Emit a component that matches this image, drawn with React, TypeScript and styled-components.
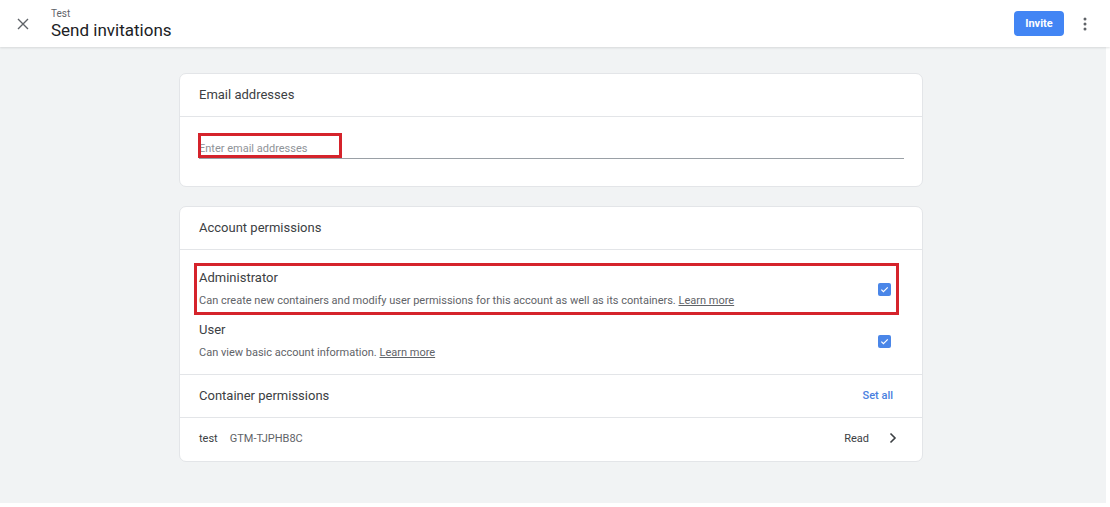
import React from "react";
import styled, { createGlobalStyle } from "styled-components";

const GlobalStyle = createGlobalStyle`
  html, body {
    margin: 0;
    padding: 0;
    background: #ffffff;
    font-family: Roboto, "Liberation Sans", Arial, sans-serif;
    -webkit-font-smoothing: antialiased;
  }
  * { box-sizing: border-box; }
`;

const Page = styled.div`
  width: 1110px;
  height: 507px;
  background: #ffffff;
  display: flex;
  flex-direction: column;
  overflow: hidden;
`;

const TopBar = styled.header`
  height: 47px;
  flex: none;
  display: flex;
  align-items: center;
  padding: 0 13px 0 17px;
  background: #ffffff;
  box-shadow: 0 1px 2px rgba(60, 64, 67, 0.15);
  position: relative;
  z-index: 1;
`;

const CloseButton = styled.button`
  width: 12px;
  height: 12px;
  padding: 0;
  border: none;
  background: none;
  display: flex;
  color: #5f6368;
  cursor: pointer;
`;

const TitleBlock = styled.div`
  margin-left: 22px;
  display: flex;
  flex-direction: column;
  padding-top: 1px;
`;

const Breadcrumb = styled.span`
  font-size: 10px;
  line-height: 12px;
  color: #5f6368;
`;

const Title = styled.h1`
  margin: 0;
  font-size: 17px;
  line-height: 21px;
  font-weight: 400;
  color: #202124;
`;

const Spacer = styled.div`
  flex: 1;
`;

const InviteButton = styled.button`
  width: 50px;
  height: 25px;
  border: none;
  border-radius: 4px;
  background: #4285f4;
  color: #ffffff;
  font-family: inherit;
  font-size: 11px;
  font-weight: 700;
  cursor: pointer;
  margin-top: -1px;
`;

const MoreButton = styled.button`
  width: 24px;
  height: 24px;
  margin-left: 9px;
  border: none;
  background: none;
  padding: 0;
  display: flex;
  align-items: center;
  justify-content: center;
  color: #5f6368;
`;

const Main = styled.main`
  width: 1106px;
  height: 456px;
  background: #f1f3f4;
  padding: 26px 4px 0 0;
`;

const Column = styled.div`
  width: 744px;
  margin: 0 auto;
  display: flex;
  flex-direction: column;
  gap: 19px;
`;

const Card = styled.section`
  background: #ffffff;
  border: 1px solid #e3e5e8;
  border-radius: 7px;
  overflow: hidden;
`;

const CardHeader = styled.div`
  height: 43px;
  display: flex;
  align-items: center;
  justify-content: space-between;
  padding: 0 29px 1px 19px;
  border-bottom: 1px solid #e3e5e8;
`;

const CardTitle = styled.h2`
  margin: 0;
  font-size: 13px;
  font-weight: 400;
  color: #3c4043;
`;

const TextLink = styled.a`
  font-size: 11px;
  font-weight: 500;
  color: #4a7fe0;
  text-decoration: none;
  cursor: pointer;
`;

const EmailBody = styled.div`
  padding: 17px 18px 27px 19px;
`;

const FieldWrap = styled.div`
  position: relative;
  height: 25px;
  border-bottom: 1px solid #9aa0a6;
`;

const EmailInput = styled.input`
  width: 100%;
  height: 24px;
  border: none;
  outline: none;
  padding: 5px 0 0 0;
  font-family: inherit;
  font-size: 11px;
  color: #202124;
  background: transparent;
  &::placeholder {
    color: #8f9398;
  }
`;

const Annotation = styled.div`
  position: absolute;
  left: -1px;
  top: -1px;
  width: 144px;
  height: 25px;
  border: 3px solid #d5232b;
  pointer-events: none;
`;

const OptionList = styled.div`
  padding: 13px 0 7px;
  border-bottom: 1px solid #e3e5e8;
`;

const OptionRow = styled.label<{ $marked?: boolean }>`
  display: flex;
  align-items: center;
  margin: 0 23px 0 14px;
  padding: 5px 8px 5px 5px;
  outline: ${(p) => (p.$marked ? "3px solid #d5232b" : "none")};
  outline-offset: -3px;
`;

const OptionText = styled.div`
  flex: 1;
  display: flex;
  flex-direction: column;
  gap: 4px;
`;

const OptionTitle = styled.span`
  font-size: 13px;
  line-height: 20px;
  color: #3c4043;
`;

const OptionDesc = styled.span`
  font-size: 11px;
  line-height: 18px;
  color: #5f6368;
  a {
    color: #5f6368;
    text-decoration: underline;
  }
`;

const CheckBox = styled.span`
  width: 13px;
  height: 13px;
  border-radius: 2px;
  background: #4a86e8;
  display: flex;
  align-items: center;
  justify-content: center;
  flex: none;
`;

const ContainerRow = styled.div`
  height: 43px;
  display: flex;
  align-items: center;
  padding: 0 25px 3px 19px;
  font-size: 11px;
`;

const ContainerName = styled.span`
  color: #3c4043;
`;

const ContainerId = styled.span`
  margin-left: 12px;
  color: #5f6368;
`;

const RoleText = styled.span`
  color: #3c4043;
  margin-right: 20px;
`;

const Check = () => (
  <svg width="9" height="9" viewBox="0 0 10 10" fill="none">
    <path d="M1.5 5.2l2.3 2.3L8.6 2.6" stroke="#ffffff" strokeWidth="1.3" />
  </svg>
);

type Option = { title: string; desc: string; marked?: boolean };

const options: Option[] = [
  {
    title: "Administrator",
    desc: "Can create new containers and modify user permissions for this account as well as its containers.",
    marked: true,
  },
  { title: "User", desc: "Can view basic account information." },
];

export default function App() {
  return (
    <>
      <GlobalStyle />
      <Page>
        <TopBar>
          <CloseButton aria-label="Close">
            <svg width="12" height="12" viewBox="0 0 12 12">
              <path d="M1 1l10 10M11 1L1 11" stroke="currentColor" strokeWidth="1.4" />
            </svg>
          </CloseButton>
          <TitleBlock>
            <Breadcrumb>Test</Breadcrumb>
            <Title>Send invitations</Title>
          </TitleBlock>
          <Spacer />
          <InviteButton>Invite</InviteButton>
          <MoreButton aria-label="More">
            <svg width="4" height="14" viewBox="0 0 4 14">
              <circle cx="2" cy="2" r="1.5" fill="currentColor" />
              <circle cx="2" cy="7" r="1.5" fill="currentColor" />
              <circle cx="2" cy="12" r="1.5" fill="currentColor" />
            </svg>
          </MoreButton>
        </TopBar>
        <Main>
          <Column>
            <Card>
              <CardHeader>
                <CardTitle>Email addresses</CardTitle>
              </CardHeader>
              <EmailBody>
                <FieldWrap>
                  <EmailInput placeholder="Enter email addresses" />
                  <Annotation />
                </FieldWrap>
              </EmailBody>
            </Card>

            <Card>
              <CardHeader>
                <CardTitle>Account permissions</CardTitle>
              </CardHeader>
              <OptionList>
                {options.map((o) => (
                  <OptionRow key={o.title} $marked={o.marked}>
                    <OptionText>
                      <OptionTitle>{o.title}</OptionTitle>
                      <OptionDesc>
                        {o.desc} <a>Learn more</a>
                      </OptionDesc>
                    </OptionText>
                    <CheckBox>
                      <Check />
                    </CheckBox>
                  </OptionRow>
                ))}
              </OptionList>
              <CardHeader>
                <CardTitle>Container permissions</CardTitle>
                <TextLink>Set all</TextLink>
              </CardHeader>
              <ContainerRow>
                <ContainerName>test</ContainerName>
                <ContainerId>GTM-TJPHB8C</ContainerId>
                <Spacer />
                <RoleText>Read</RoleText>
                <svg width="8" height="12" viewBox="0 0 8 12">
                  <path d="M1.5 1.5L6 6l-4.5 4.5" stroke="#3c4043" strokeWidth="1.6" fill="none" />
                </svg>
              </ContainerRow>
            </Card>
          </Column>
        </Main>
      </Page>
    </>
  );
}
